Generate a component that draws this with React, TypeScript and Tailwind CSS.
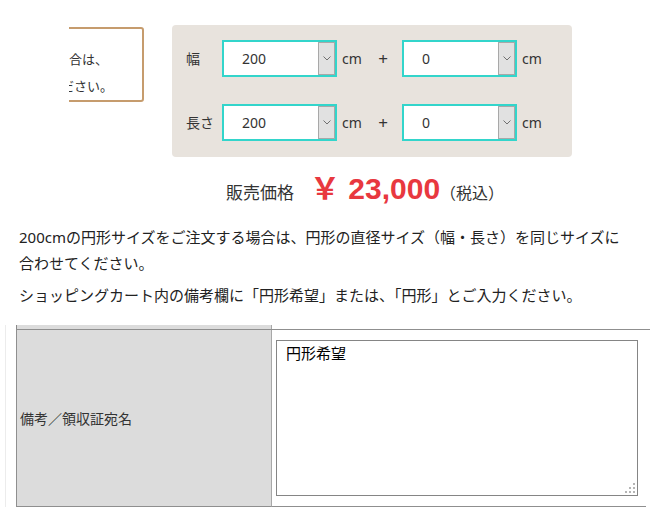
const jp = { fontFamily: '"Noto Sans", "Noto Sans CJK JP", sans-serif' };

function Chevron() {
  return (
    <svg width="8" height="5" viewBox="0 0 8 5" fill="none">
      <path d="M0.5 0.5 L4 4 L7.5 0.5" stroke="#707070" strokeWidth="1" />
    </svg>
  );
}

function Grip() {
  const dots = [
    [8, 0],
    [4, 4],
    [8, 4],
    [0, 8],
    [4, 8],
    [8, 8],
  ];
  return (
    <svg width="10" height="10" viewBox="0 0 10 10">
      {dots.map(([x, y]) => (
        <rect key={`${x}-${y}`} x={x} y={y} width="2" height="2" fill="#b5b5b5" />
      ))}
    </svg>
  );
}

function SizeSelect({ value }: { value: string }) {
  return (
    <div className="flex h-[37px] w-[115px] border-2 border-[#33d5cb] bg-white">
      <div className="flex flex-1 items-center pl-[18px] text-[14px] text-[#333]">{value}</div>
      <div className="flex w-[17px] items-center justify-center border border-[#a8a8a8] bg-[#e1e1e1]">
        <Chevron />
      </div>
    </div>
  );
}

function SizeRow({ label, main, extra }: { label: string; main: string; extra: string }) {
  return (
    <div className="flex h-[37px] items-center text-[14px] text-[#333]">
      <span className="w-[36px]">{label}</span>
      <SizeSelect value={main} />
      <span className="ml-[5px] w-[30px]">cm</span>
      <span className="w-[22px] text-center text-[17px]">+</span>
      <div className="ml-[8px]">
        <SizeSelect value={extra} />
      </div>
      <span className="ml-[5px]">cm</span>
    </div>
  );
}

export default function App() {
  return (
    <div className="h-[510px] w-[650px] overflow-hidden bg-white text-[#333]" style={jp}>
      <div className="flex items-start pt-[25px]">
        {/* note box, cut off on the left */}
        <div className="ml-[69px] mt-[2px] w-[75px] overflow-hidden">
          <div className="ml-[-226px] h-[75px] w-[301px] rounded-[3px] border-2 border-[#c69c6d] pt-[17px] text-[13px] leading-[27px]">
            <div className="pr-[34px] text-right">円形サイズをご希望の場合は、</div>
            <div className="pr-[29px] text-right">備考欄にご入力ください。</div>
          </div>
        </div>

        <div className="ml-[28px] flex h-[132px] w-[400px] flex-col gap-[27px] rounded-[4px] bg-[#e8e3dd] pl-[14px] pt-[15px]">
          <SizeRow label="幅" main="200" extra="0" />
          <SizeRow label="長さ" main="200" extra="0" />
        </div>
      </div>

      <div className="ml-[226px] mt-[17px] flex items-baseline leading-[30px]">
        <span className="text-[17px] text-[#333]">販売価格</span>
        <span
          className="ml-[16px] text-[30px] font-bold text-[#e8383f]"
          style={{ fontFamily: '"Liberation Sans", "Noto Sans CJK JP", sans-serif' }}
        >
          ￥ 23,000
        </span>
        <span className="text-[16px] text-[#333]">（税込）</span>
      </div>

      <div className="ml-[19px] mt-[16px] w-[612px] text-[15px] leading-[26px] text-[#222]">
        <p>200cmの円形サイズをご注文する場合は、円形の直径サイズ（幅・長さ）を同じサイズに合わせてください。</p>
        <p className="mt-[6px]">ショッピングカート内の備考欄に「円形希望」または、「円形」とご入力ください。</p>
      </div>

      <div className="ml-[5px] mt-[17px] border-l border-[#ececec] pl-[10px]">
        <div className="w-[635px]">
          <div className="flex h-[4px] border-l border-[#8a8a8a]">
            <div className="w-[255px] border-r border-[#a8a8a8] bg-[#dcdcdc]" />
          </div>
          <div className="flex border-t border-l border-[#8f8f8f]">
            <div className="flex w-[255px] items-center border-b border-r border-[#a8a8a8] border-b-[#8f8f8f] bg-[#dcdcdc] pl-[3px] text-[14px] text-[#333]">
              備考／領収証宛名
            </div>
            <div className="w-[374px] border-b border-[#8f8f8f] py-[10px] pl-[4px]">
              <div className="relative w-[362px]">
                <textarea
                  defaultValue="円形希望"
                  className="block h-[156px] w-[362px] resize-none border border-[#858585] px-[9px] py-[1px] text-[15px] leading-[22px] text-black outline-none"
                  style={jp}
                />
                <div className="pointer-events-none absolute bottom-[3px] right-[3px] flex">
                  <Grip />
                </div>
              </div>
            </div>
          </div>
        </div>
      </div>
    </div>
  );
}
